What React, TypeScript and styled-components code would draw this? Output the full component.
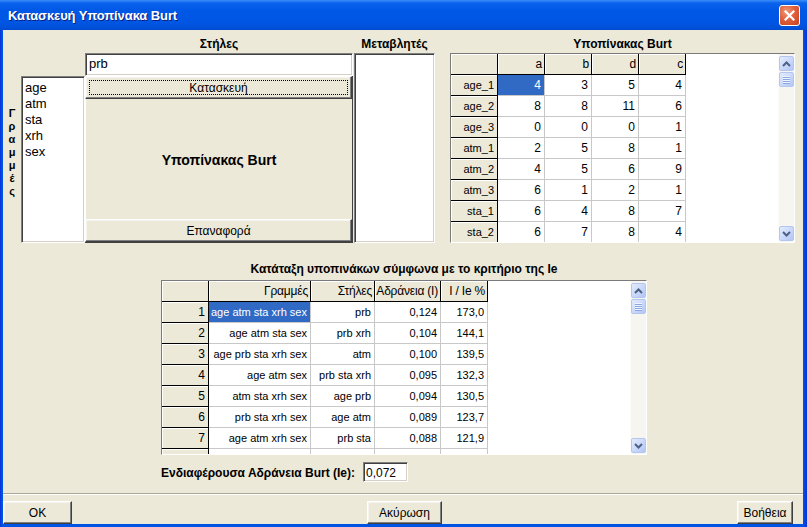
import React from 'react';
import styled, { createGlobalStyle, css } from 'styled-components';

const GlobalStyle = createGlobalStyle`
  html, body {
    margin: 0;
    padding: 0;
    background: #ffffff;
  }
  * {
    box-sizing: border-box;
  }
  body {
    font-family: 'Liberation Sans', Arial, sans-serif;
    font-size: 12px;
    color: #000;
  }
`;

const sunken = css`
  border: 1px solid;
  border-color: #808080 #ffffff #ffffff #808080;
  box-shadow: inset 1px 1px 0 #404040, inset -1px -1px 0 #d4d0c8;
`;

const raised = css`
  border: 1px solid;
  border-color: #ffffff #404040 #404040 #ffffff;
  box-shadow: inset -1px -1px 0 #808080, inset 1px 1px 0 #f5f4ee;
`;

const Window = styled.div`
  width: 807px;
  height: 527px;
  display: flex;
  flex-direction: column;
  background: linear-gradient(to right, #0831d9 0px, #0054e3 2px, #0054e3 803px, #0831d9 807px);
  overflow: hidden;
`;

const TitleBar = styled.div`
  height: 30px;
  flex: none;
  display: flex;
  align-items: center;
  padding: 0 7px 0 8px;
  background: linear-gradient(
    to bottom,
    #3c8ff8 0px,
    #0a63ec 3px,
    #0058e6 10px,
    #0056e4 22px,
    #0050d8 28px,
    #0049cc 30px
  );
`;

const Title = styled.div`
  flex: 1;
  color: #ffffff;
  font-weight: bold;
  font-size: 13px;
  letter-spacing: -0.1px;
  text-shadow: 1px 1px 0 #0a1f80;
`;

const CloseButton = styled.div`
  width: 21px;
  height: 21px;
  margin-top: 1px;
  border: 1px solid #ffffff;
  border-radius: 3px;
  background: radial-gradient(circle at 35% 30%, #ef9a7c 0%, #e0613c 45%, #c7401c 100%);
  display: flex;
  align-items: center;
  justify-content: center;
`;

const Body = styled.div`
  flex: 1;
  margin: 0 4px 3px 3px;
  background: #ece9d8;
  display: flex;
  flex-direction: column;
`;

const TopSection = styled.div`
  display: flex;
  margin-top: 6px;
  height: 207px;
  flex: none;
`;

const Column = styled.div<{ $width: number; $left?: number }>`
  width: ${(p) => p.$width}px;
  margin-left: ${(p) => p.$left ?? 0}px;
  display: flex;
  flex-direction: column;
  justify-content: flex-end;
  flex: none;
`;

const Label = styled.div`
  height: 17px;
  line-height: 17px;
  font-weight: bold;
  font-size: 12px;
  text-align: center;
  white-space: nowrap;
`;

const VerticalLabel = styled.div`
  height: 167px;
  display: flex;
  flex-direction: column;
  align-items: center;
  justify-content: center;
  padding-bottom: 14px;
  font-weight: bold;
  font-size: 11px;
  line-height: 13px;
`;

const ListBox = styled.div<{ $height: number }>`
  ${sunken};
  height: ${(p) => p.$height}px;
  background: #ffffff;
  padding: 3px 0 0 3px;
  font-size: 13px;
  line-height: 16px;
`;

const TextInput = styled.div<{ $height: number }>`
  ${sunken};
  height: ${(p) => p.$height}px;
  background: #ffffff;
  padding: 2px 0 0 3px;
  font-size: 13px;
  line-height: 16px;
`;

const SmallInput = styled(TextInput)`
  width: 45px;
  font-size: 12px;
  padding: 2px 0 0 2px;
`;

const Panel = styled.div`
  height: 167px;
  display: flex;
  flex-direction: column;
  border-right: 1px solid #404040;
  border-bottom: 1px solid #404040;
  background: #ece9d8;
`;

const Button = styled.div<{ $width?: number; $focus?: boolean }>`
  ${raised};
  position: relative;
  height: 23px;
  ${(p) => (p.$width ? `width: ${p.$width}px;` : '')}
  flex: none;
  background: #ece9d8;
  display: flex;
  align-items: center;
  justify-content: center;
  font-size: 12px;
  ${(p) =>
    p.$focus &&
    css`
      &::after {
        content: '';
        position: absolute;
        inset: 3px 3px 3px 3px;
        border: 1px dotted #000000;
      }
    `}
`;

const PanelCenter = styled.div`
  flex: 1;
  display: flex;
  align-items: center;
  justify-content: center;
  font-weight: bold;
  font-size: 14px;
  padding-top: 2px;
  border-left: 1px solid #ffffff;
`;

const GridBox = styled.div<{ $height: number; $width: number }>`
  width: ${(p) => p.$width}px;
  height: ${(p) => p.$height}px;
  display: flex;
  border-top: 1px solid #7a7a7a;
  border-left: 1px solid #7a7a7a;
  border-right: 1px solid #ffffff;
  border-bottom: 1px solid #ffffff;
  background: #ffffff;
  overflow: hidden;
  flex: none;
`;

const GridArea = styled.div`
  flex: 1;
  overflow: hidden;
`;

const Table = styled.table<{ $width: number }>`
  width: ${(p) => p.$width}px;
  border-collapse: separate;
  border-spacing: 0;
  table-layout: fixed;
`;

const Cell = styled.td<{ $fixed?: boolean; $selected?: boolean; $width?: number; $big?: boolean }>`
  height: 21px;
  padding: 0 3px 0 0;
  text-align: right;
  white-space: nowrap;
  overflow: hidden;
  font-size: ${(p) => (p.$big ? 12 : 11)}px;
  line-height: 20px;
  ${(p) => (p.$width ? `width: ${p.$width}px;` : '')}
  ${(p) =>
    p.$fixed
      ? css`
          background: #ece9d8;
          border-right: 1px solid #000000;
          border-bottom: 1px solid #000000;
          box-shadow: inset 1px 1px 0 #ffffff;
        `
      : css`
          background: ${p.$selected ? '#316ac5' : '#ffffff'};
          color: ${p.$selected ? '#ffffff' : '#000000'};
          border-right: 1px solid #c8c8c8;
          border-bottom: 1px solid #c8c8c8;
        `}
`;

const HeadCell = styled(Cell)`
  font-size: 12px;
  padding-right: 2px;
  letter-spacing: -0.2px;
`;

const ScrollTrack = styled.div`
  width: 16px;
  flex: none;
  display: flex;
  flex-direction: column;
  padding: 2px 0 0 0;
  background: #f6f5f0;
  border-left: 1px solid #fbfbf8;
`;

const ScrollButton = styled.div`
  width: 15px;
  height: 15px;
  margin-bottom: 1px;
  border: 1px solid #b4c6f0;
  border-radius: 2px;
  background: linear-gradient(to bottom right, #e4ecfd 0%, #c6d5fa 60%, #b2c6f3 100%);
  display: flex;
  align-items: center;
  justify-content: center;
  flex: none;
`;

const ScrollSpacer = styled.div`
  flex: 1;
`;

const MiddleSection = styled.div`
  margin-left: 158px;
  margin-top: 18px;
  display: flex;
  flex-direction: column;
  flex: none;
`;

const SectionTitle = styled(Label)`
  width: 486px;
  height: 19px;
  line-height: 17px;
`;

const IeRow = styled.div`
  display: flex;
  align-items: center;
  gap: 5px;
  margin-top: 7px;
  height: 20px;
`;

const IeLabel = styled.div`
  font-weight: bold;
  font-size: 12px;
  width: 197px;
  white-space: nowrap;
  padding-top: 2px;
`;

const Separator = styled.div`
  margin-top: 11px;
  height: 2px;
  border-top: 1px solid #aca899;
  border-bottom: 1px solid #ffffff;
  flex: none;
`;

const ButtonRow = styled.div`
  margin-top: 6px;
  display: flex;
  flex: none;
`;

const UpArrow = () => (
  <svg width="9" height="6" viewBox="0 0 9 6">
    <path d="M1 5 L4.5 1.5 L8 5" fill="none" stroke="#4d6185" strokeWidth="2" />
  </svg>
);

const DownArrow = () => (
  <svg width="9" height="6" viewBox="0 0 9 6">
    <path d="M1 1 L4.5 4.5 L8 1" fill="none" stroke="#4d6185" strokeWidth="2" />
  </svg>
);

const Grip = () => (
  <svg width="7" height="8" viewBox="0 0 7 8">
    {[0.5, 2.5, 4.5, 6.5].map((y) => (
      <line key={y} x1="0" x2="7" y1={y} y2={y} stroke="#eef3fe" strokeWidth="1" />
    ))}
    {[1.5, 3.5, 5.5, 7.5].map((y) => (
      <line key={y} x1="0" x2="7" y1={y} y2={y} stroke="#8ca6e0" strokeWidth="1" />
    ))}
  </svg>
);

const Scrollbar = () => (
  <ScrollTrack>
    <ScrollButton>
      <UpArrow />
    </ScrollButton>
    <ScrollButton>
      <Grip />
    </ScrollButton>
    <ScrollSpacer />
    <ScrollButton>
      <DownArrow />
    </ScrollButton>
  </ScrollTrack>
);

const burtCols = ['a', 'b', 'd', 'c'];
const burtRows: [string, number[]][] = [
  ['age_1', [4, 3, 5, 4]],
  ['age_2', [8, 8, 11, 6]],
  ['age_3', [0, 0, 0, 1]],
  ['atm_1', [2, 5, 8, 1]],
  ['atm_2', [4, 5, 6, 9]],
  ['atm_3', [6, 1, 2, 1]],
  ['sta_1', [6, 4, 8, 7]],
  ['sta_2', [6, 7, 8, 4]]
];

const rankHead = ['Γραμμές', 'Στήλες', 'Αδράνεια (I)', 'I / Ie %'];
const rankWidths = [47, 102, 64, 66, 47];
const rankRows = [
  ['age atm sta xrh sex', 'prb', '0,124', '173,0'],
  ['age atm sta sex', 'prb xrh', '0,104', '144,1'],
  ['age prb sta xrh sex', 'atm', '0,100', '139,5'],
  ['age atm sex', 'prb sta xrh', '0,095', '132,3'],
  ['atm sta xrh sex', 'age prb', '0,094', '130,5'],
  ['prb sta xrh sex', 'age atm', '0,089', '123,7'],
  ['age atm xrh sex', 'prb sta', '0,088', '121,9'],
  ['age atm sta sex', 'prb xrh', '0,086', '119,8']
];

const variables = ['age', 'atm', 'sta', 'xrh', 'sex'];

export default function App() {
  return (
    <>
      <GlobalStyle />
      <Window>
        <TitleBar>
          <Title>Κατασκευή Υποπίνακα Burt</Title>
          <CloseButton>
            <svg width="11" height="11" viewBox="0 0 11 11">
              <path d="M1.5 1.5 L9.5 9.5 M9.5 1.5 L1.5 9.5" stroke="#ffffff" strokeWidth="2.2" strokeLinecap="square" />
            </svg>
          </CloseButton>
        </TitleBar>
        <Body>
          <TopSection>
            <Column $width={18}>
              <VerticalLabel>
                {'Γραμμές'.split('').map((ch, i) => (
                  <span key={i}>{ch}</span>
                ))}
              </VerticalLabel>
            </Column>
            <Column $width={64}>
              <ListBox $height={167}>
                {variables.map((v) => (
                  <div key={v}>{v}</div>
                ))}
              </ListBox>
            </Column>
            <Column $width={268}>
              <Label>Στήλες</Label>
              <TextInput $height={23}>prb</TextInput>
              <Panel>
                <Button $focus>Κατασκευή</Button>
                <PanelCenter>Υποπίνακας Burt</PanelCenter>
                <Button>Επαναφορά</Button>
              </Panel>
            </Column>
            <Column $width={81} $left={1}>
              <Label>Μεταβλητές</Label>
              <ListBox $height={190} />
            </Column>
            <Column $width={345} $left={15}>
              <Label>Υποπίνακας Burt</Label>
              <GridBox $width={345} $height={190}>
                <GridArea>
                  <Table $width={235}>
                    <tbody>
                      <tr>
                        <HeadCell $fixed $width={47} />
                        {burtCols.map((c) => (
                          <HeadCell key={c} $fixed $width={47}>
                            {c}
                          </HeadCell>
                        ))}
                      </tr>
                      {burtRows.map(([name, vals], r) => (
                        <tr key={name}>
                          <Cell $fixed>{name}</Cell>
                          {vals.map((v, c) => (
                            <Cell key={c} $big $selected={r === 0 && c === 0}>
                              {v}
                            </Cell>
                          ))}
                        </tr>
                      ))}
                    </tbody>
                  </Table>
                </GridArea>
                <Scrollbar />
              </GridBox>
            </Column>
          </TopSection>

          <MiddleSection>
            <SectionTitle>Κατάταξη υποπινάκων σύμφωνα με το κριτήριο της Ie</SectionTitle>
            <GridBox $width={486} $height={175}>
              <GridArea>
                <Table $width={326}>
                  <tbody>
                    <tr>
                      <HeadCell $fixed $width={rankWidths[0]} />
                      {rankHead.map((h, i) => (
                        <HeadCell key={h} $fixed $width={rankWidths[i + 1]}>
                          {h}
                        </HeadCell>
                      ))}
                    </tr>
                    {rankRows.map((row, r) => (
                      <tr key={r}>
                        <Cell $fixed $big>
                          {r + 1}
                        </Cell>
                        {row.map((v, c) => (
                          <Cell key={c} $selected={r === 0 && c === 0}>
                            {v}
                          </Cell>
                        ))}
                      </tr>
                    ))}
                  </tbody>
                </Table>
              </GridArea>
              <Scrollbar />
            </GridBox>
            <IeRow>
              <IeLabel>Ενδιαφέρουσα Αδράνεια Burt (Ie):</IeLabel>
              <SmallInput $height={20}>0,072</SmallInput>
            </IeRow>
          </MiddleSection>

          <Separator />
          <ButtonRow>
            <Button $width={69}>OK</Button>
            <Button $width={75} style={{ marginLeft: 295 }}>
              Ακύρωση
            </Button>
            <Button $width={56} style={{ marginLeft: 'auto', marginRight: 10 }}>
              Βοήθεια
            </Button>
          </ButtonRow>
        </Body>
      </Window>
    </>
  );
}
